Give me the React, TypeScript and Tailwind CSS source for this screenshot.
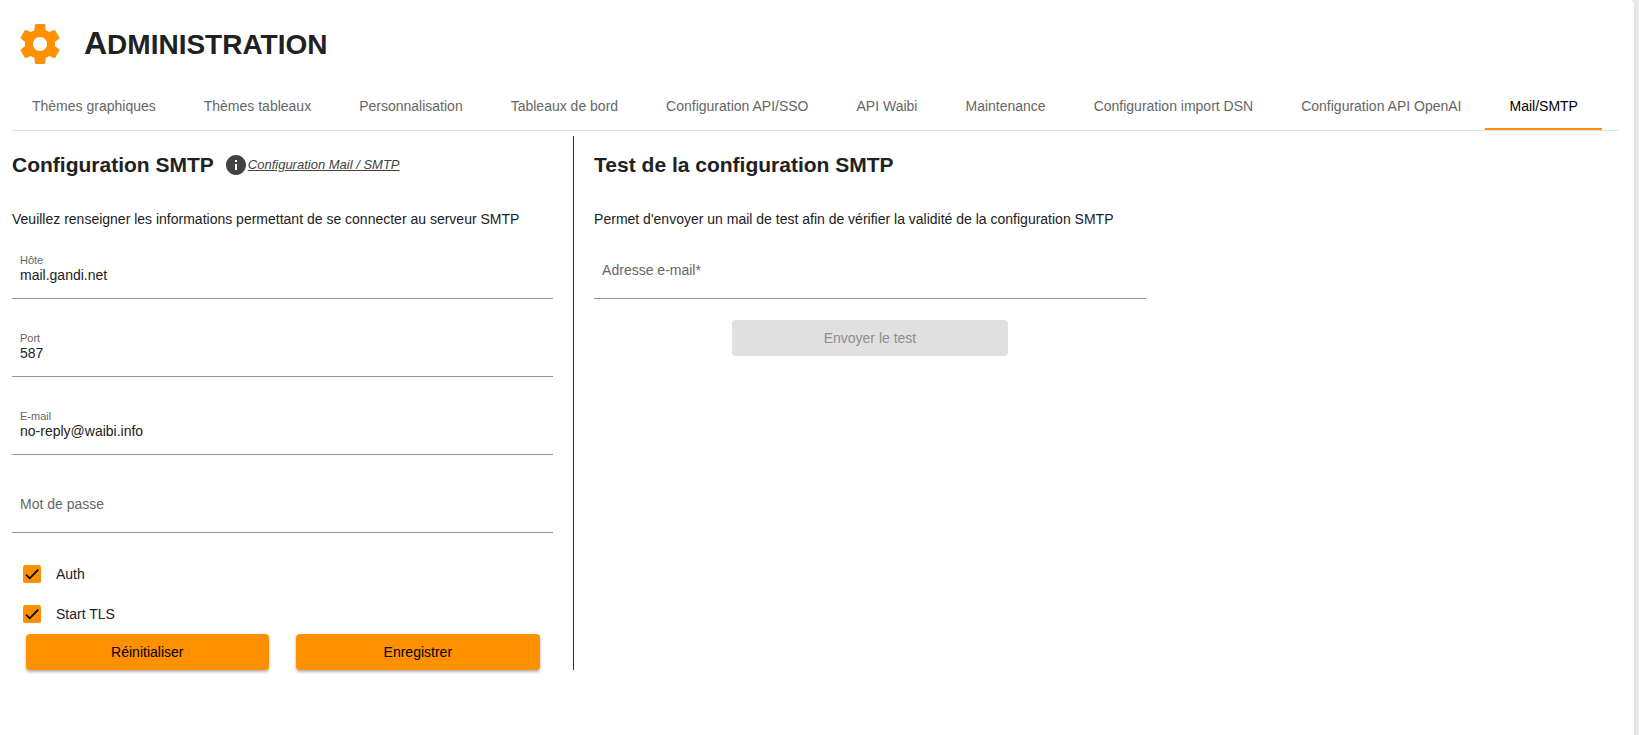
import { useState } from "react";
import { MdInfo } from "react-icons/md";

const tabs = [
  "Thèmes graphiques",
  "Thèmes tableaux",
  "Personnalisation",
  "Tableaux de bord",
  "Configuration API/SSO",
  "API Waibi",
  "Maintenance",
  "Configuration import DSN",
  "Configuration API OpenAI",
  "Mail/SMTP",
];

const GearIcon = () => (
  <svg viewBox="0 0 24 24" className="size-12 text-[#ff9000]" fill="currentColor">
    <path d="M19.43 12.98c.04-.32.07-.64.07-.98s-.03-.66-.07-.98l2.11-1.65c.19-.15.24-.42.12-.64l-2-3.46c-.12-.22-.39-.3-.61-.22l-2.49 1c-.52-.4-1.08-.73-1.69-.98l-.38-2.65C14.46 2.18 14.25 2 14 2h-4c-.25 0-.46.18-.49.42l-.38 2.65c-.61.25-1.17.59-1.69.98l-2.49-1c-.23-.09-.49 0-.61.22l-2 3.46c-.13.22-.07.49.12.64l2.11 1.65c-.04.32-.07.65-.07.98s.03.66.07.98l-2.11 1.65c-.19.15-.24.42-.12.64l2 3.46c.12.22.39.3.61.22l2.49-1c.52.4 1.08.73 1.69.98l.38 2.65c.03.24.24.42.49.42h4c.25 0 .46-.18.49-.42l.38-2.65c.61-.25 1.17-.59 1.69-.98l2.49 1c.23.09.49 0 .61-.22l2-3.46c.12-.22.07-.49-.12-.64l-2.11-1.65zM12 15.5c-1.93 0-3.5-1.57-3.5-3.5s1.57-3.5 3.5-3.5 3.5 1.57 3.5 3.5-1.57 3.5-3.5 3.5z" />
  </svg>
);

type FieldProps = {
  id: string;
  label: string;
  type?: string;
  required?: boolean;
  value: string;
  onChange: (value: string) => void;
};

// The label floats above the value, or lies over the input while it is empty
const Field = ({ id, label, type = "text", required, value, onChange }: FieldProps) => {
  return (
    <div
      className={`relative mb-[21px] flex h-[57px] flex-col justify-center border-b border-[#949494] px-2 text-[#666] ${
        value ? "pb-0.5" : ""
      }`}
    >
      <label
        htmlFor={id}
        className={value ? "text-[11px] leading-3" : "pointer-events-none absolute leading-5"}
      >
        {label}
        {required && "*"}
      </label>
      <input
        id={id}
        type={type}
        required={required}
        value={value}
        onChange={(e) => onChange(e.target.value)}
        className="w-full bg-transparent leading-[18px] text-[#212121] outline-none"
      />
    </div>
  );
};

type CheckProps = {
  label: string;
  checked: boolean;
  onChange: (checked: boolean) => void;
};

const Check = ({ label, checked, onChange }: CheckProps) => {
  return (
    <label className="flex h-10 items-center gap-[15px] pl-[11px]">
      <span className="grid size-[18px] place-items-center">
        <input
          type="checkbox"
          checked={checked}
          onChange={(e) => onChange(e.target.checked)}
          className="col-start-1 row-start-1 size-[18px] appearance-none rounded-xs border-2 border-[#666] checked:border-[#ff9000] checked:bg-[#ff9000]"
        />
        {checked && (
          <svg
            viewBox="0 0 24 24"
            className="pointer-events-none col-start-1 row-start-1 size-[14px]"
            fill="none"
            stroke="#000"
            strokeWidth="3"
          >
            <path d="M1.73,12.91 8.1,19.28 22.79,4.59" />
          </svg>
        )}
      </span>
      {label}
    </label>
  );
};

const App = () => {
  const [activeTab, setActiveTab] = useState<string>("Mail/SMTP");
  const [host, setHost] = useState<string>("mail.gandi.net");
  const [port, setPort] = useState<string>("587");
  const [email, setEmail] = useState<string>("no-reply@waibi.info");
  const [password, setPassword] = useState<string>("");
  const [auth, setAuth] = useState<boolean>(true);
  const [startTls, setStartTls] = useState<boolean>(true);
  const [testEmail, setTestEmail] = useState<string>("");

  const onReset = () => {
    setHost("mail.gandi.net");
    setPort("587");
    setEmail("no-reply@waibi.info");
    setPassword("");
    setAuth(true);
    setStartTls(true);
  };

  return (
    <div className="min-h-screen bg-[#eaeaea] pr-[5px] font-['Liberation_Sans',Arial,sans-serif] text-sm text-[#212121]">
      <div className="min-h-screen rounded-tr bg-white pr-4 pl-3 shadow-sm">
        <header className="flex h-[82px] items-center gap-5 pt-1.5 pl-1">
          <GearIcon />
          <h1 className="text-[28px] leading-10 font-bold uppercase first-letter:text-[32px]">
            Administration
          </h1>
        </header>

        <nav className="border-b border-[#e0e0e0]">
          <div role="tablist" className="-ml-1 flex">
            {tabs.map((tab) => (
              <button
                key={tab}
                type="button"
                role="tab"
                aria-selected={tab === activeTab}
                onClick={() => setActiveTab(tab)}
                className={`h-12 border-b-2 px-6 pt-0.5 whitespace-nowrap ${
                  tab === activeTab
                    ? "border-[#ff9000] text-black"
                    : "border-transparent text-[#666]"
                }`}
              >
                {tab}
              </button>
            ))}
          </div>
        </nav>

        <main className="mt-[5px] flex items-start">
          <form
            className="w-[35%] border-r border-[#333] pr-5"
            onSubmit={(e) => e.preventDefault()}
          >
            <div className="flex h-[58px] items-center">
              <h2 className="text-[21px] font-bold">Configuration SMTP</h2>
              <a href="#smtp" className="ml-[10px] flex items-center text-[#424242]">
                <MdInfo className="size-6" />
                <span className="text-[13px] italic underline">Configuration Mail / SMTP</span>
              </a>
            </div>
            <p className="mt-[15px] mb-[13px] leading-5">
              Veuillez renseigner les informations permettant de se connecter au serveur SMTP
            </p>
            <Field id="host" label="Hôte" value={host} onChange={setHost} />
            <Field id="port" label="Port" value={port} onChange={setPort} />
            <Field id="email" label="E-mail" type="email" value={email} onChange={setEmail} />
            <Field
              id="password"
              label="Mot de passe"
              type="password"
              value={password}
              onChange={setPassword}
            />
            <Check label="Auth" checked={auth} onChange={setAuth} />
            <Check label="Start TLS" checked={startTls} onChange={setStartTls} />
            <div className="flex justify-around">
              <button
                type="button"
                onClick={onReset}
                className="h-9 w-[45%] rounded bg-[#ff9000] text-black shadow-[0_2px_3px_rgba(0,0,0,0.3)]"
              >
                Réinitialiser
              </button>
              <button
                type="submit"
                className="h-9 w-[45%] rounded bg-[#ff9000] text-black shadow-[0_2px_3px_rgba(0,0,0,0.3)]"
              >
                Enregistrer
              </button>
            </div>
          </form>

          <form className="w-[35.6%] pl-5" onSubmit={(e) => e.preventDefault()}>
            <div className="flex h-[58px] items-center">
              <h2 className="text-[21px] font-bold">Test de la configuration SMTP</h2>
            </div>
            <p className="mt-[15px] mb-[13px] leading-5">
              Permet d'envoyer un mail de test afin de vérifier la validité de la configuration SMTP
            </p>
            <Field
              id="testEmail"
              label="Adresse e-mail"
              type="email"
              required
              value={testEmail}
              onChange={setTestEmail}
            />
            <div className="flex justify-center">
              <button
                type="submit"
                disabled={!testEmail}
                className="h-9 w-1/2 rounded bg-[#ff9000] text-black disabled:bg-[#e0e0e0] disabled:text-[#8e8e8e]"
              >
                Envoyer le test
              </button>
            </div>
          </form>
        </main>
      </div>
    </div>
  );
};
export default App;
